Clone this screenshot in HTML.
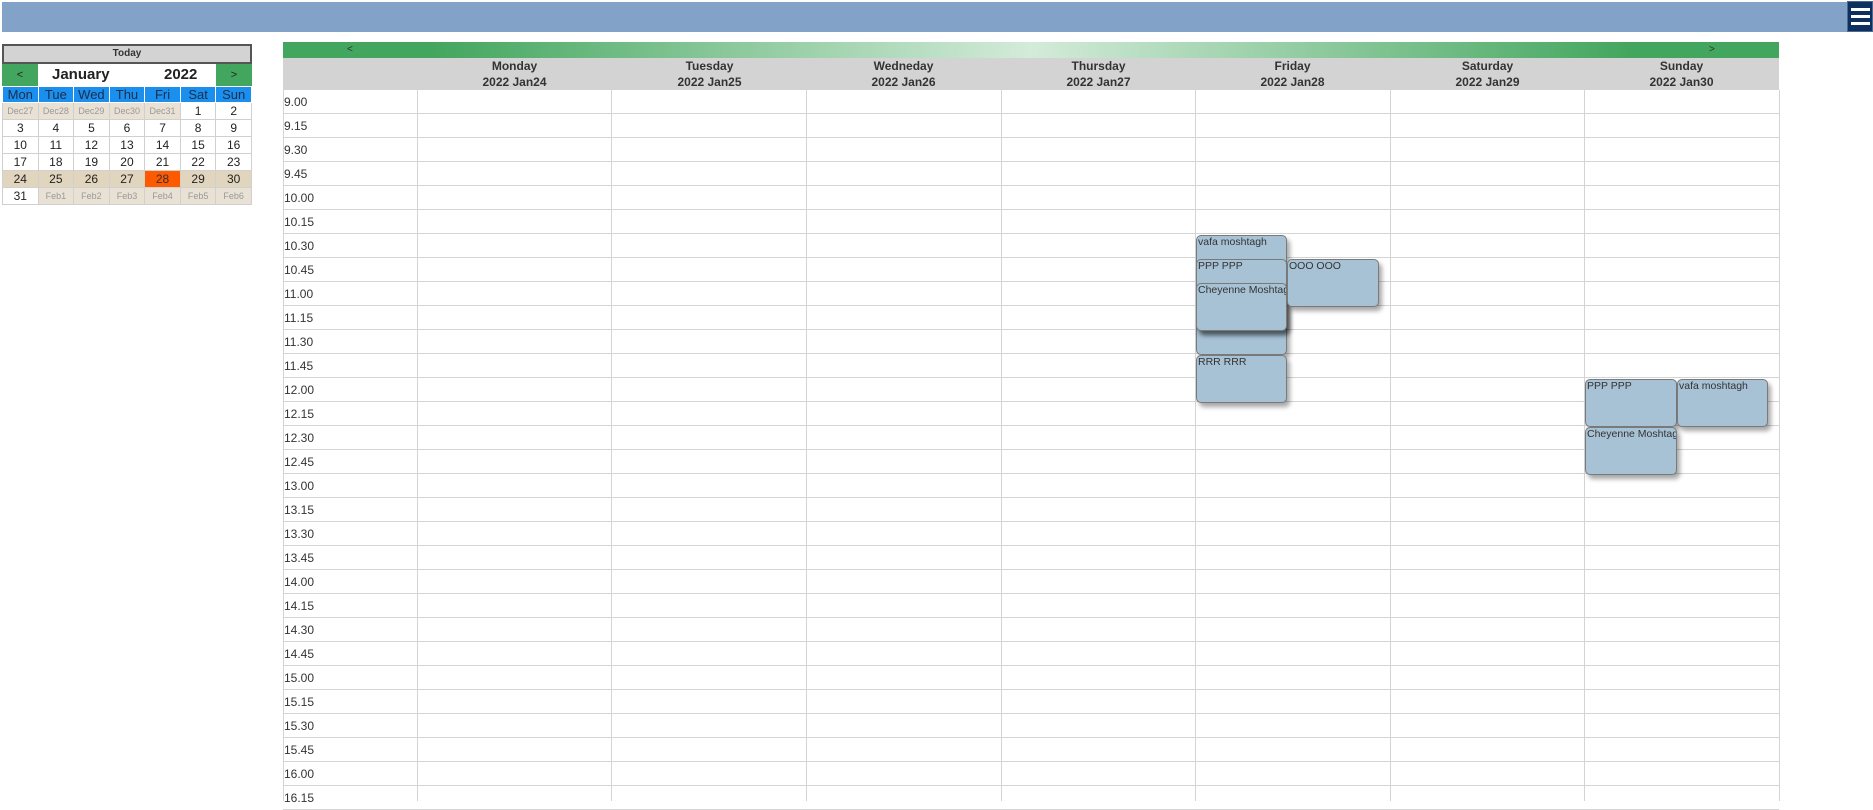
<!DOCTYPE html>
<html><head><meta charset="utf-8"><style>
*{box-sizing:border-box;margin:0;padding:0}
body{width:1873px;height:801px;overflow:hidden;background:#fff;font-family:"Liberation Sans",Arial,sans-serif;color:#333;position:relative}
.a{position:absolute}
#top{left:2px;top:2px;width:1871px;height:30px;background:#82a3c7}
#ham{left:1847px;top:1px;width:26px;height:31px;background:#0d3060;border:1px solid #4a6a90}
#ham i{position:absolute;left:3px;width:19px;height:3px;background:#fff}
table{border-collapse:collapse}
#cal{left:2px;top:64px;width:250px;table-layout:fixed}
#cal td{text-align:center;font-size:12px;border:1px solid #d0d0d0;height:17px;color:#222;overflow:hidden;white-space:nowrap}
#cal tr.h td{background:#1a8fee;color:#1d2d4a;font-size:13px;border:1px solid #fff;height:16px}
#cal td.g{background:#e9e1d3;color:#999;font-size:9px}
#cal tr.w td{background:#e2d5bd}
#cal td.t{background:#ff5a00!important;color:#333}
#today{left:2px;top:44px;width:250px;height:20px;background:#d3d3d3;border:2px solid #555;font-size:10px;font-weight:bold;text-align:center;line-height:16px}
#nav{left:2px;top:64px;width:250px;height:22px;background:#fff}
.gb{position:absolute;top:0;width:36px;height:22px;background:#43a65e;text-align:center;font-size:11px;line-height:22px;color:#222}
#gbar{left:283px;top:42px;width:1496px;height:16px;background:linear-gradient(90deg,#43a65e 0%,#43a65e 10%,#d3ebd9 50%,#43a65e 90%,#43a65e 100%);font-size:10px;line-height:16px}
#hdr{left:283px;top:58px;width:1496px;height:32px;background:#d3d3d3}
.dh{position:absolute;top:0;width:195px;text-align:center;font-size:12px;font-weight:bold;line-height:16px}
.row{position:absolute;left:283px;width:1496px;height:24px;border-bottom:1px solid #d4d4d4;font-size:12px;line-height:24px;padding-left:1px}
.vl{position:absolute;top:90px;width:1px;height:711px;background:#d4d4d4}
.ev{position:absolute;background:#a7c2d5;border:1px solid #7a7a7a;border-radius:5px;box-shadow:3px 4px 5px rgba(0,0,0,.35);font-size:10.5px;line-height:12px;color:#333;padding:0 1px;overflow:hidden;white-space:nowrap}
</style></head><body>
<div id="top" class="a"></div>
<div id="ham" class="a"><i style="top:6px"></i><i style="top:13px"></i><i style="top:20px"></i></div>

<div id="today" class="a">Today</div>
<div id="nav" class="a"><div class="gb" style="left:0">&lt;</div><div class="a" style="left:50px;top:2px;font-size:15px;font-weight:bold;color:#222">January</div><div class="a" style="left:162px;top:2px;font-size:15px;font-weight:bold;color:#222">2022</div><div class="gb" style="left:214px">&gt;</div></div>
<table id="cal" class="a" style="top:86px">
<tr class="h"><td>Mon</td><td>Tue</td><td>Wed</td><td>Thu</td><td>Fri</td><td>Sat</td><td>Sun</td></tr>
<tr><td class="g">Dec27</td><td class="g">Dec28</td><td class="g">Dec29</td><td class="g">Dec30</td><td class="g">Dec31</td><td>1</td><td>2</td></tr>
<tr><td>3</td><td>4</td><td>5</td><td>6</td><td>7</td><td>8</td><td>9</td></tr>
<tr><td>10</td><td>11</td><td>12</td><td>13</td><td>14</td><td>15</td><td>16</td></tr>
<tr><td>17</td><td>18</td><td>19</td><td>20</td><td>21</td><td>22</td><td>23</td></tr>
<tr class="w"><td>24</td><td>25</td><td>26</td><td>27</td><td class="t">28</td><td>29</td><td>30</td></tr>
<tr><td>31</td><td class="g">Feb1</td><td class="g">Feb2</td><td class="g">Feb3</td><td class="g">Feb4</td><td class="g">Feb5</td><td class="g">Feb6</td></tr>
</table>

<div id="gbar" class="a"><span class="a" style="left:64px">&lt;</span><span class="a" style="left:1426px">&gt;</span></div>
<div id="hdr" class="a">
<div class="dh" style="left:134px">Monday<br>2022 Jan24</div>
<div class="dh" style="left:329px">Tuesday<br>2022 Jan25</div>
<div class="dh" style="left:523px">Wedneday<br>2022 Jan26</div>
<div class="dh" style="left:718px">Thursday<br>2022 Jan27</div>
<div class="dh" style="left:912px">Friday<br>2022 Jan28</div>
<div class="dh" style="left:1107px">Saturday<br>2022 Jan29</div>
<div class="dh" style="left:1301px">Sunday<br>2022 Jan30</div>
</div>

<div class="row" style="top:90px">9.00</div>
<div class="row" style="top:114px">9.15</div>
<div class="row" style="top:138px">9.30</div>
<div class="row" style="top:162px">9.45</div>
<div class="row" style="top:186px">10.00</div>
<div class="row" style="top:210px">10.15</div>
<div class="row" style="top:234px">10.30</div>
<div class="row" style="top:258px">10.45</div>
<div class="row" style="top:282px">11.00</div>
<div class="row" style="top:306px">11.15</div>
<div class="row" style="top:330px">11.30</div>
<div class="row" style="top:354px">11.45</div>
<div class="row" style="top:378px">12.00</div>
<div class="row" style="top:402px">12.15</div>
<div class="row" style="top:426px">12.30</div>
<div class="row" style="top:450px">12.45</div>
<div class="row" style="top:474px">13.00</div>
<div class="row" style="top:498px">13.15</div>
<div class="row" style="top:522px">13.30</div>
<div class="row" style="top:546px">13.45</div>
<div class="row" style="top:570px">14.00</div>
<div class="row" style="top:594px">14.15</div>
<div class="row" style="top:618px">14.30</div>
<div class="row" style="top:642px">14.45</div>
<div class="row" style="top:666px">15.00</div>
<div class="row" style="top:690px">15.15</div>
<div class="row" style="top:714px">15.30</div>
<div class="row" style="top:738px">15.45</div>
<div class="row" style="top:762px">16.00</div>
<div class="row" style="top:786px">16.15</div>

<div class="vl" style="left:283px"></div>
<div class="vl" style="left:417px"></div>
<div class="vl" style="left:611px"></div>
<div class="vl" style="left:806px"></div>
<div class="vl" style="left:1001px"></div>
<div class="vl" style="left:1195px"></div>
<div class="vl" style="left:1390px"></div>
<div class="vl" style="left:1584px"></div>
<div class="vl" style="left:1779px"></div>

<div class="ev" style="left:1196px;top:235px;width:91px;height:120px">vafa moshtagh</div>
<div class="ev" style="left:1196px;top:259px;width:91px;height:72px">PPP PPP</div>
<div class="ev" style="left:1196px;top:283px;width:91px;height:48px">Cheyenne Moshtagh</div>
<div class="ev" style="left:1287px;top:259px;width:92px;height:48px">OOO OOO</div>
<div class="ev" style="left:1196px;top:355px;width:91px;height:48px">RRR RRR</div>
<div class="ev" style="left:1585px;top:379px;width:92px;height:48px">PPP PPP</div>
<div class="ev" style="left:1677px;top:379px;width:91px;height:48px">vafa moshtagh</div>
<div class="ev" style="left:1585px;top:427px;width:92px;height:48px">Cheyenne Moshtagh</div>
</body></html>
